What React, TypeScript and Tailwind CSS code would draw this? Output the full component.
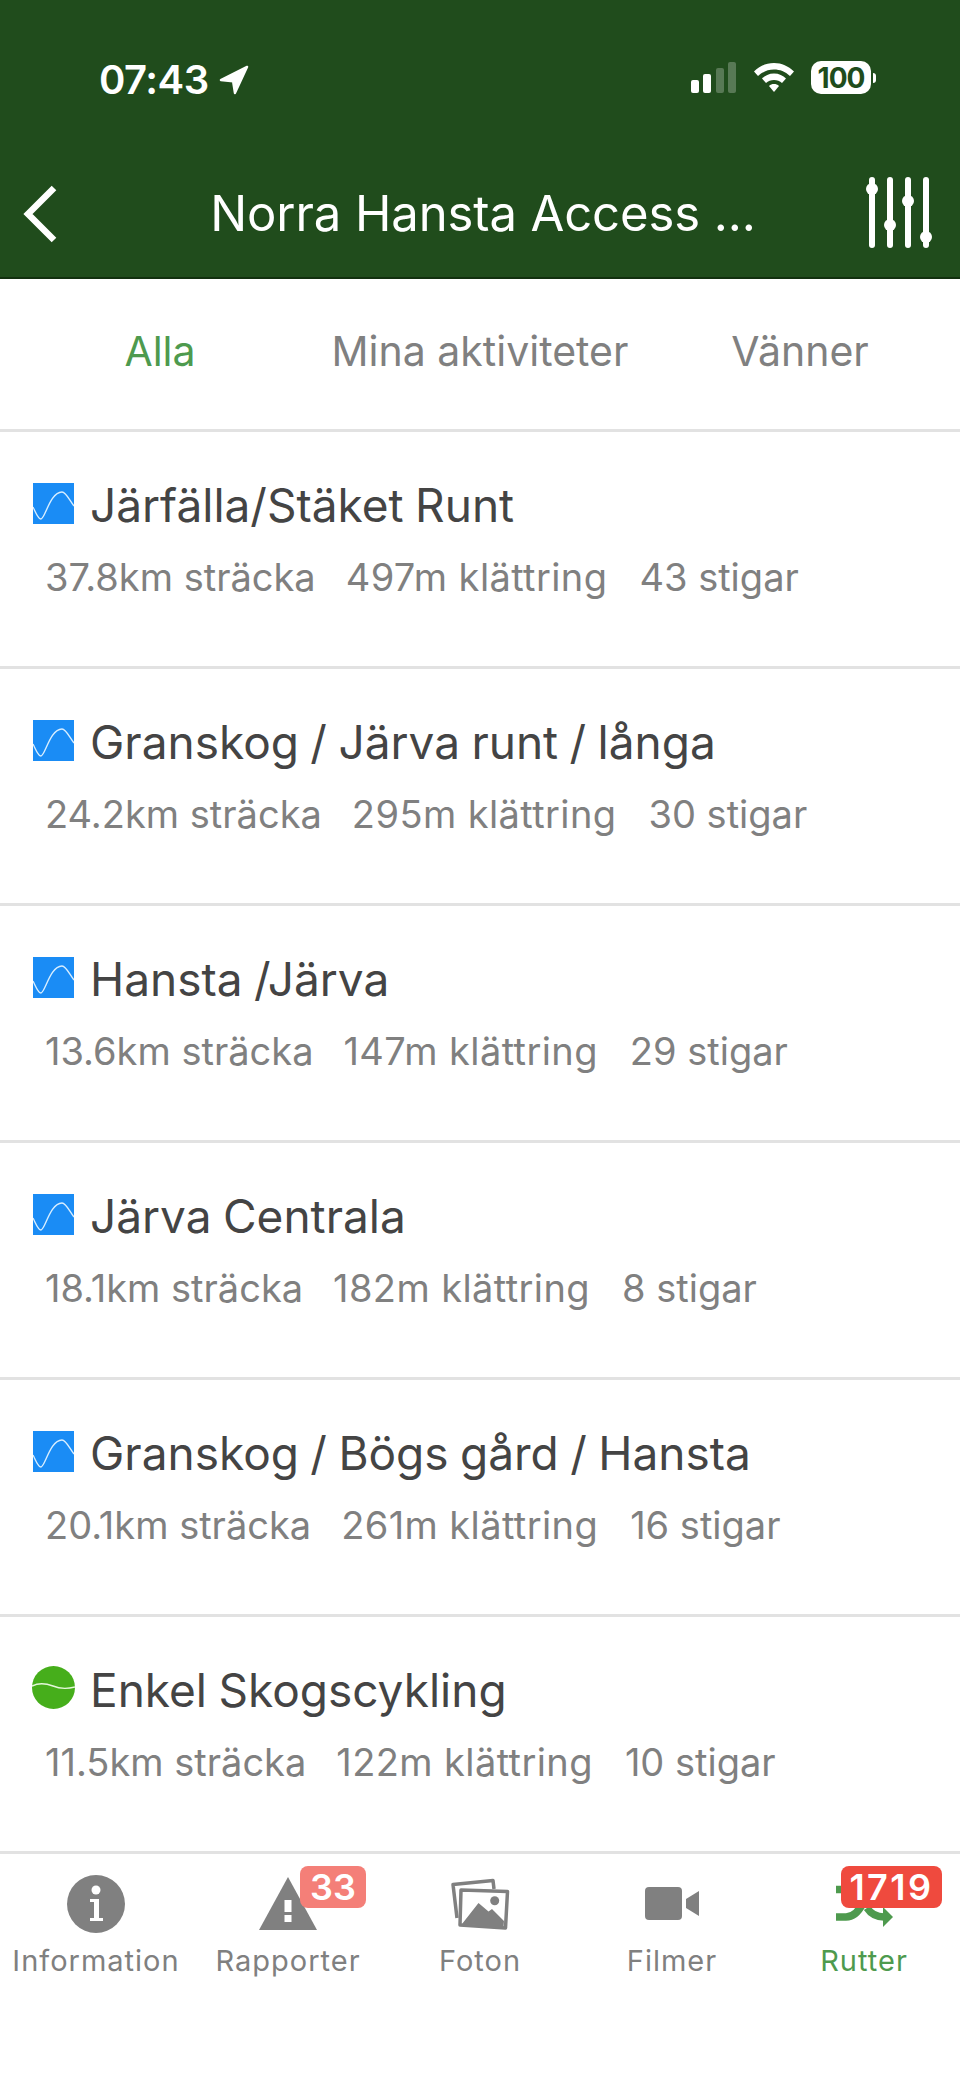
import { ReactNode } from 'react';

const routes = [
  { name: 'Järfälla/Stäket Runt', dist: '37.8km sträcka', climb: '497m klättring', trails: '43 stigar', kind: 'blue' },
  { name: 'Granskog / Järva runt / långa', dist: '24.2km sträcka', climb: '295m klättring', trails: '30 stigar', kind: 'blue' },
  { name: 'Hansta /Järva', dist: '13.6km sträcka', climb: '147m klättring', trails: '29 stigar', kind: 'blue' },
  { name: 'Järva Centrala', dist: '18.1km sträcka', climb: '182m klättring', trails: '8 stigar', kind: 'blue' },
  { name: 'Granskog / Bögs gård / Hansta', dist: '20.1km sträcka', climb: '261m klättring', trails: '16 stigar', kind: 'blue' },
  { name: 'Enkel Skogscykling', dist: '11.5km sträcka', climb: '122m klättring', trails: '10 stigar', kind: 'green' },
];

function BlueIcon() {
  return (
    <svg width="41" height="41" viewBox="0 0 41 41" className="mb-[3px] shrink-0">
      <rect width="41" height="41" fill="#1a8cf5" />
      <path d="M0 24 C3 30 5 36 8 36 C12 36 17 9 29 9 C33 9 37 18 41 23" fill="none" stroke="#d8eeff" strokeWidth="1.4" />
    </svg>
  );
}

function GreenIcon() {
  return (
    <svg width="43" height="43" viewBox="0 0 43 43" className="-mx-[1px] mb-[5px] shrink-0">
      <circle cx="21.5" cy="21.5" r="21.5" fill="#46ae1b" />
      <path d="M0 20 C6 17 13 17 21 20 C28 23 35 23 43 21" fill="none" stroke="#e4f7da" strokeWidth="1.4" />
    </svg>
  );
}

function RouteRow({ route }: { route: (typeof routes)[number] }) {
  return (
    <div className="h-[237px] border-b-[3px] border-[#e2e2e2] pl-[33px] pt-[45px]">
      <div className="flex h-[56px] items-center gap-[16px]">
        {route.kind === 'blue' ? <BlueIcon /> : <GreenIcon />}
        <span className="text-[46px] leading-[56px] text-[#444444] [word-spacing:-1.5px]">{route.name}</span>
      </div>
      <div className="mt-[21px] flex pl-[12px] text-[38px] leading-[46px] text-[#808080]">
        <span>{route.dist}</span>
        <span className="ml-[30px] tracking-[0.4px]">{route.climb}</span>
        <span className="ml-8">{route.trails}</span>
      </div>
    </div>
  );
}

function TabItem({ icon, label, active, badge }: { icon: ReactNode; label: string; active?: boolean; badge?: ReactNode }) {
  return (
    <div className="relative flex w-[192px] flex-col items-center pt-[21px]">
      <div className="flex h-[58px] items-center justify-center">{icon}</div>
      {badge}
      <span className={'mt-[10px] text-[29px] leading-[36px] tracking-[1px] ' + (active ? 'text-[#4e9a4e]' : 'text-[#808080]')}>{label}</span>
    </div>
  );
}

export default function App() {
  return (
    <div className="flex h-[2079px] w-[960px] flex-col overflow-hidden bg-white font-['Inter','Liberation_Sans',sans-serif]">
      <header className="h-[279px] shrink-0 border-b-2 border-[#12300f] bg-[#204c1c] text-white">
        <div className="flex h-[172px] items-start justify-between pl-[99px] pr-[84px] pt-[57px]">
          <div className="flex items-center gap-[10px]">
            <span className="text-[40px] font-semibold leading-[46px] tracking-[-0.5px]">07:43</span>
            <svg width="30" height="32" viewBox="0 0 32 32">
              <path d="M30 2 L2 16 L15 17.5 L17 30 Z" fill="white" stroke="white" strokeWidth="2.5" strokeLinejoin="round" />
            </svg>
          </div>
          <div className="flex items-center gap-[17px] pt-[4px]">
            <svg width="46" height="32" viewBox="0 0 46 32">
              <rect x="0" y="18" width="8" height="13" rx="2" fill="white" />
              <rect x="12" y="12" width="8" height="19" rx="2" fill="white" />
              <rect x="25" y="6" width="8" height="25" rx="2" fill="white" fillOpacity="0.25" />
              <rect x="37" y="0" width="8" height="31" rx="2" fill="white" fillOpacity="0.25" />
            </svg>
            <svg width="40" height="30" viewBox="0 0 40 30">
              <path d="M20 0 C12 0 6 3 0 8.5 L4 13 C9 8.5 14 6.5 20 6.5 C26 6.5 31 8.5 36 13 L40 8.5 C34 3 28 0 20 0 Z" fill="white" />
              <path d="M20 10.5 C15 10.5 11 12.5 8 15.5 L12 20 C14 18 17 17 20 17 C23 17 26 18 28 20 L32 15.5 C29 12.5 25 10.5 20 10.5 Z" fill="white" />
              <path d="M20 21 C18 21 16.5 21.5 15 23 L20 29 L25 23 C23.5 21.5 22 21 20 21 Z" fill="white" />
            </svg>
            <div className="flex items-center gap-[2px]">
              <div className="flex h-[33px] w-[60px] items-center justify-center rounded-[10px] bg-white text-[28px] font-bold leading-none tracking-[-1px] text-[#204c1c]">100</div>
              <div className="h-[10px] w-[3px] rounded-r-full bg-white" />
            </div>
          </div>
        </div>
        <div className="relative flex h-[105px] items-start justify-center pl-[6px] pt-[14px]">
          <svg width="40" height="60" viewBox="0 0 40 60" className="absolute left-[19px] top-[12px]">
            <path d="M35 4 L9 30 L35 56" fill="none" stroke="white" strokeWidth="6.5" />
          </svg>
          <span className="text-[49px] font-normal leading-[56px] tracking-[-0.1px]">Norra Hansta Access ...</span>
          <svg width="68" height="74" viewBox="0 0 68 74" className="absolute left-[866px] top-[4px]">
            <g fill="white">
              <rect x="3" y="1" width="6" height="71" rx="3" />
              <circle cx="6" cy="13" r="6" />
              <rect x="21" y="1" width="6" height="71" rx="3" />
              <circle cx="24" cy="49" r="6" />
              <rect x="39" y="1" width="6" height="71" rx="3" />
              <circle cx="42" cy="25" r="6" />
              <rect x="57" y="1" width="6" height="71" rx="3" />
              <circle cx="60" cy="61" r="6" />
            </g>
          </svg>
        </div>
      </header>
      <nav className="flex h-[153px] shrink-0 items-center border-b-[3px] border-[#e2e2e2] pb-[4px] text-[41px]">
        <span className="w-[320px] text-center text-[#4e9a4e]">Alla</span>
        <span className="w-[320px] text-center text-[#808080]">Mina aktiviteter</span>
        <span className="w-[320px] text-center text-[#808080]">Vänner</span>
      </nav>
      <main className="h-[1422px] shrink-0">
        {routes.map((route) => (
          <RouteRow key={route.name} route={route} />
        ))}
      </main>
      <footer className="flex flex-1">
        <TabItem
          label="Information"
          icon={
            <svg width="58" height="58" viewBox="0 0 58 58">
              <circle cx="29" cy="29" r="29" fill="#808080" />
              <circle cx="29" cy="15" r="4.5" fill="white" />
              <path d="M23 24 H32 V43 H36 V46 H23 V43 H27 V27 H23 Z" fill="white" />
            </svg>
          }
        />
        <TabItem
          label="Rapporter"
          icon={
            <svg width="58" height="54" viewBox="0 0 58 54">
              <path d="M29 0 L58 53 H0 Z" fill="#808080" />
              <rect x="25.5" y="23" width="7" height="12" fill="white" />
              <rect x="25.5" y="38" width="7" height="7" fill="white" />
            </svg>
          }
          badge={
            <div className="absolute left-[108px] top-[12px] flex h-[42px] w-[66px] items-center justify-center rounded-[8px] bg-[#f47f78] text-[36px] font-semibold text-white">33</div>
          }
        />
        <TabItem
          label="Foton"
          icon={
            <svg width="60" height="52" viewBox="0 0 60 52">
              <path d="M44 11 L43 2.5 L3 6.5 L7 40" fill="none" stroke="#808080" strokeWidth="3.5" strokeLinejoin="round" />
              <path d="M11 12 L57.5 13.5 L55.5 50 L10 47 Z" fill="white" stroke="#808080" strokeWidth="3.5" strokeLinejoin="round" />
              <path d="M12 46 L28.5 25 L38.5 33.5 L42 31 L54 43 L53.5 49 Z" fill="#808080" />
              <circle cx="44.7" cy="22.7" r="4.5" fill="#808080" />
            </svg>
          }
        />
        <TabItem
          label="Filmer"
          icon={
            <svg width="54" height="34" viewBox="0 0 54 34">
              <rect x="0" y="0" width="37" height="33" rx="4" fill="#808080" />
              <path d="M41 12 L54 4 V29 L41 21 Z" fill="#808080" />
            </svg>
          }
        />
        <TabItem
          label="Rutter"
          active
          icon={
            <svg width="58" height="46" viewBox="0 0 58 46" className="ml-[2px]">
              <path d="M0 8.5 H14" fill="none" stroke="#4e9a4e" strokeWidth="7.5" />
              <path d="M0 36 H10 C18 36 23 30 27 22" fill="none" stroke="#4e9a4e" strokeWidth="7.5" />
              <path d="M31 27 C35 33 41 36 48 36" fill="none" stroke="#4e9a4e" strokeWidth="7.5" />
              <path d="M47 26 L57 36 L47 46 Z" fill="#4e9a4e" />
            </svg>
          }
          badge={
            <div className="absolute left-[73px] top-[12px] flex h-[42px] w-[101px] items-center justify-center rounded-[8px] bg-[#ef4a3e] text-[36px] font-semibold tracking-[2.5px] text-white">1719</div>
          }
        />
      </footer>
    </div>
  );
}
